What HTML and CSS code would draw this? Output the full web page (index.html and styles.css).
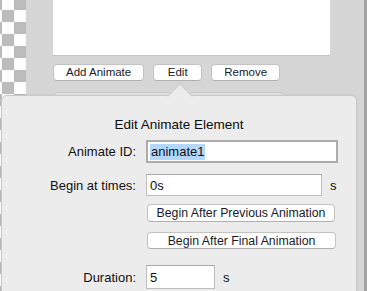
FILE: index.html
```html
<!DOCTYPE html>
<html lang="en">
  <head>
    <meta charset="UTF-8" />
    <title>Edit Animate Element</title>
    <link rel="stylesheet" href="styles.css">
  </head>
  <body>
    <div class="window">
      <!-- transparent canvas preview -->
      <div class="checker"></div>

      <div class="panel">
        <div class="list"></div>
        <div class="actions">
          <button class="btn">Add Animate</button>
          <button class="btn btn-edit">Edit</button>
          <button class="btn">Remove</button>
        </div>
        <div class="below"></div>
      </div>

      <div class="edge"></div>

      <!-- popover opened from the Edit button -->
      <div class="popover">
        <h2 class="popover-title">Edit Animate Element</h2>

        <div class="row row-id">
          <label class="label">Animate ID:</label>
          <div class="field field-id"><span class="selected">animate1</span></div>
        </div>

        <div class="row row-begin">
          <label class="label">Begin at times:</label>
          <div class="field field-begin">0s</div>
          <span class="unit">s</span>
        </div>

        <div class="row row-btn1">
          <span class="label"></span>
          <button class="small-btn btn-prev">Begin After Previous Animation</button>
        </div>

        <div class="row row-btn2">
          <span class="label"></span>
          <button class="small-btn btn-final">Begin After Final Animation</button>
        </div>

        <div class="row row-dur">
          <label class="label">Duration:</label>
          <div class="field field-dur">5</div>
          <span class="unit">s</span>
        </div>
      </div>
    </div>
  </body>
</html>
```

FILE: styles.css
```css
body {
  margin: 0;
  padding: 0;
  font-family: 'Liberation Sans', Arial, sans-serif;
  color: #111;
  overflow: hidden;
}

.window {
  position: relative;
  display: flex;
  width: 367px;
  height: 291px;
  overflow: hidden;
}

/* Checkerboard strip on the left */
.checker {
  width: 26px;
  flex-shrink: 0;
  background: conic-gradient(#bcbcbc 25%, #ffffff 0 50%, #bcbcbc 0 75%, #ffffff 0) 2px -2px / 24px 24px;
}

.panel {
  flex: 1;
  background-color: #d6d6d6;
  padding-left: 27px;
}

.list {
  width: 277px;
  height: 55px;
  background-color: #ffffff;
  box-shadow: 0 1px 0 #c4c4c4;
}

.actions {
  display: flex;
  gap: 9px;
  margin-top: 9px;
}

.btn {
  height: 17px;
  padding: 0 12px;
  background-color: #ffffff;
  border: 1px solid #c3c3c3;
  border-bottom-color: #b0b0b0;
  border-radius: 4px;
  font-family: inherit;
  font-size: 11.5px;
  color: #1a1a2e;
  line-height: 15px;
}

.btn-edit {
  width: 49px;
}

.below {
  width: 229px;
  height: 20px;
  margin-top: 11px;
  background-color: #e4e4e4;
  border: 1px solid #c8c8c8;
  border-radius: 4px;
}

.edge {
  width: 3px;
  flex-shrink: 0;
  background-color: #a2a2a2;
}

/* Popover */
.popover {
  position: absolute;
  left: 1px;
  top: 95px;
  width: 354px;
  height: 220px;
  background-color: #ececec;
  border: 1px solid #c9c9c9;
  border-radius: 6px;
  box-shadow: 0 0 3px rgba(0, 0, 0, 0.08);
}

.popover::before {
  content: '';
  position: absolute;
  left: 169px;
  top: -9px;
  width: 17px;
  height: 17px;
  background-color: #ececec;
  border-top: 1px solid #c9c9c9;
  border-left: 1px solid #c9c9c9;
  transform: rotate(45deg);
}

.popover-title {
  position: relative;
  margin: 21px 0 0;
  font-size: 13.5px;
  font-weight: normal;
  line-height: 16px;
  text-align: center;
  color: #0d0d0d;
}

.row {
  display: flex;
  align-items: center;
}

.label {
  width: 134px;
  margin-right: 10px;
  flex-shrink: 0;
  text-align: right;
  font-size: 13px;
}

.field {
  box-sizing: border-box;
  background-color: #ffffff;
  border: 1px solid #bdbdbd;
  border-top-color: #a8a8a8;
  padding-left: 3px;
  font-size: 13px;
  display: flex;
  align-items: center;
}

.unit {
  margin-left: 8px;
  font-size: 13px;
}

.row-id {
  margin-top: 7px;
}

.field-id {
  width: 192px;
  height: 23px;
  border: 2px solid #acacac;
  padding-left: 2px;
}

.selected {
  background-color: #b3d7ff;
  padding: 0 1px;
  line-height: 16px;
}

.row-begin {
  margin-top: 11px;
}

.field-begin {
  width: 176px;
  height: 22px;
}

.small-btn {
  box-sizing: border-box;
  background-color: #ffffff;
  border: 1px solid #c3c3c3;
  border-bottom-color: #b0b0b0;
  border-radius: 4px;
  font-family: inherit;
  font-size: 12.3px;
  color: #1a1a2e;
  padding: 0;
  margin-left: 1px;
}

.row-btn1 {
  margin-top: 8px;
}

.btn-prev {
  width: 188px;
  height: 18px;
}

.row-btn2 {
  margin-top: 10px;
}

.btn-final {
  width: 189px;
  height: 17px;
}

.row-dur {
  margin-top: 16px;
}

.field-dur {
  width: 69px;
  height: 24px;
}
```
